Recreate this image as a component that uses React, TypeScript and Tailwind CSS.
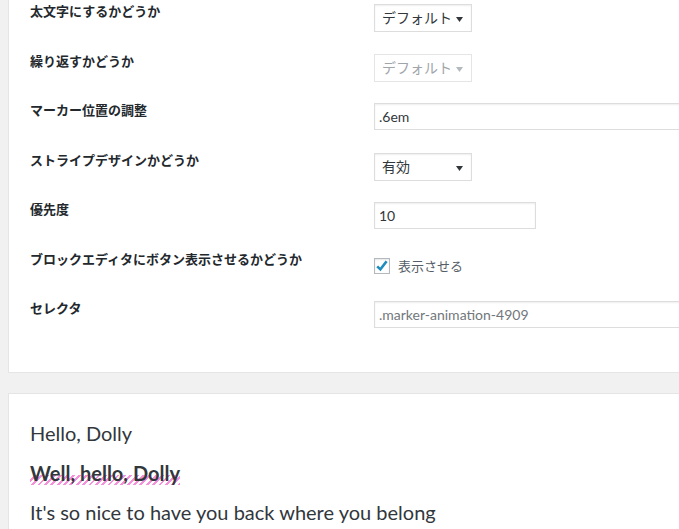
import React from 'react';

const labelCls = "w-[344px] shrink-0 text-[13px] leading-[15px] font-bold text-[#23282d]";

function Arrow({ disabled }: { disabled?: boolean }) {
  return (
    <svg width="7" height="5" viewBox="0 0 7 5" className="absolute right-[8px] top-[12px]">
      <path d="M0 0 L7 0 L3.5 5 Z" fill={disabled ? '#b4b9be' : '#32373c'} />
    </svg>
  );
}

function Select({ value, disabled }: { value: string; disabled?: boolean }) {
  return (
    <div
      className={
        disabled
          ? "relative w-[98px] h-[28px] border border-[#e5e5e5] bg-white pl-[7px] text-[14px] leading-[26px] text-[#a0a5aa]"
          : "relative w-[98px] h-[28px] border border-[#dddddd] bg-white pl-[7px] text-[14px] leading-[26px] text-[#32373c] shadow-[inset_0_1px_2px_rgba(0,0,0,0.07)]"
      }
    >
      {value}
      <Arrow disabled={disabled} />
    </div>
  );
}

function TextInput({ value, wide, muted }: { value: string; wide?: boolean; muted?: boolean }) {
  return (
    <div
      className={
        (wide ? "w-[350px] " : "w-[162px] ") +
        "h-[27px] shrink-0 border border-[#dddddd] bg-white pl-[4px] text-[14px] leading-[25px] font-['Lato','Noto_Sans',sans-serif] shadow-[inset_0_1px_2px_rgba(0,0,0,0.07)] " +
        (muted ? "text-[#72777c]" : "text-[#32373c]")
      }
    >
      {value}
    </div>
  );
}

function Row({ label, children }: { label: string; children: React.ReactNode }) {
  return (
    <div className="flex items-start h-[49.5px]">
      <div className={labelCls}>{label}</div>
      {children}
    </div>
  );
}

export default function App() {
  return (
    <div className="h-[529px] bg-[#f1f1f1] pl-[8px] overflow-hidden font-['Noto_Sans','Noto_Sans_CJK_JP',sans-serif]">
      {/* settings panel */}
      <div className="bg-white border-b border-l border-[#e5e5e5] pl-[21px] pt-[4px] h-[373px] w-[720px]">
        <Row label="太文字にするかどうか">
          <Select value="デフォルト" />
        </Row>
        <Row label="繰り返すかどうか">
          <Select value="デフォルト" disabled />
        </Row>
        <Row label="マーカー位置の調整">
          <TextInput value=".6em" wide />
        </Row>
        <Row label="ストライプデザインかどうか">
          <Select value="有効" />
        </Row>
        <Row label="優先度">
          <TextInput value="10" />
        </Row>
        <Row label="ブロックエディタにボタン表示させるかどうか">
          <div className="flex items-center gap-[8px] mt-[6.5px]">
            <div className="w-[16px] h-[16px] border border-[#b4b9be] bg-white shadow-[inset_0_1px_2px_rgba(0,0,0,0.1)] flex items-center justify-center">
              <svg width="16" height="16" viewBox="0 0 16 16" className="shrink-0">
                <path d="M3.2 8.4 L6.4 11.4 L12.6 3.2" fill="none" stroke="#1e8cbe" strokeWidth="2.6" strokeLinejoin="miter" />
              </svg>
            </div>
            <span className="text-[13px] leading-[16px] text-[#555d66]">表示させる</span>
          </div>
        </Row>
        <Row label="セレクタ">
          <TextInput value=".marker-animation-4909" wide muted />
        </Row>
      </div>

      {/* sample text panel */}
      <div className="mt-[20px] bg-white border-t border-l border-[#e5e5e5] pl-[21px] pt-[24px] w-[720px] h-[200px] text-[20px] text-[#32373c] font-['Lato','Noto_Sans',sans-serif]">
        <p className="leading-[30px] mb-[10px]">Hello, Dolly</p>
        <p className="leading-[30px] mb-[9px] font-bold">
          <span className="bg-[linear-gradient(#fff_60%,transparent_60%),repeating-linear-gradient(-45deg,#f590da_0_2px,transparent_2px_4.5px)]">
            Well, hello, Dolly
          </span>
        </p>
        <p className="leading-[30px]">It's so nice to have you back where you belong</p>
      </div>
    </div>
  );
}
